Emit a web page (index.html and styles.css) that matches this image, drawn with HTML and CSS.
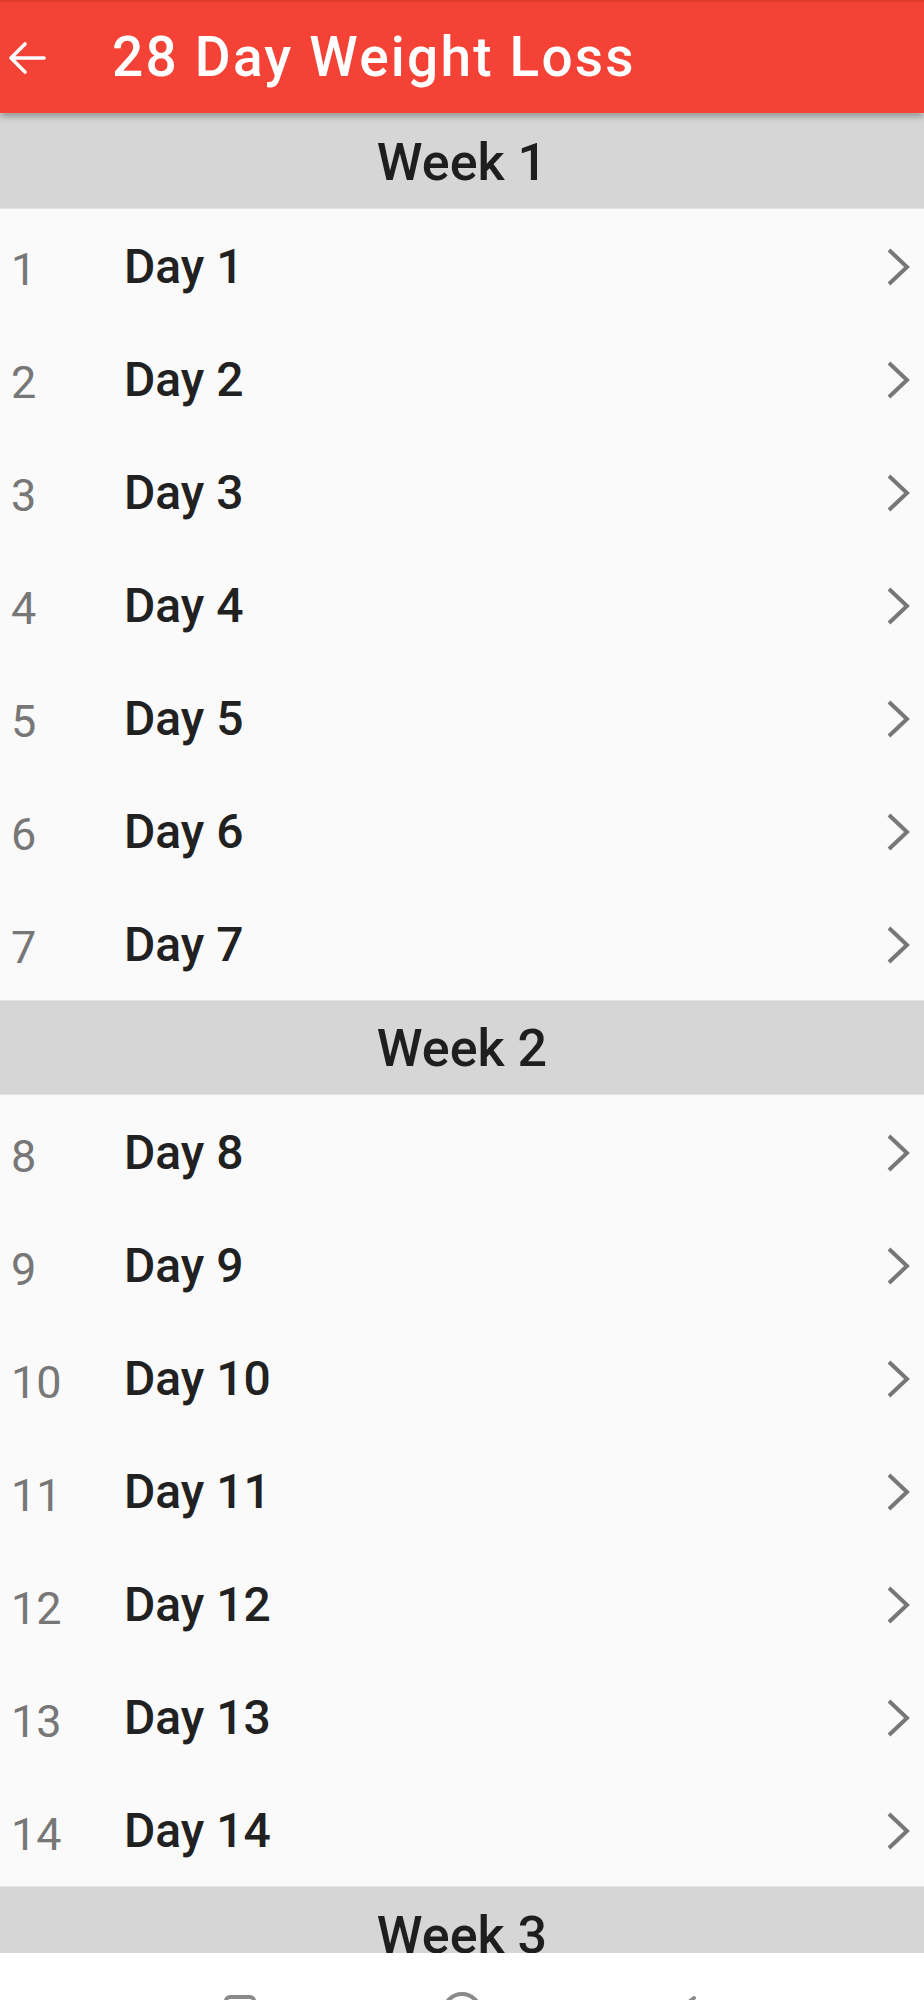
FILE: index.html
```html
<!DOCTYPE html>
<html lang="en">
<head>
<meta charset="utf-8">
<title>28 Day Weight Loss</title>
<link rel="stylesheet" href="styles.css">
</head>
<body>
<div class="app">
  <header class="appbar">
    <svg class="back" width="40" height="34" viewBox="0 0 40 34"><path d="M38 16H5M19 2L5 16l14 14" fill="none" stroke="#fff" stroke-width="3.6" stroke-linecap="round" stroke-linejoin="round"/></svg>
    <h1 class="title">28 Day Weight Loss</h1>
  </header>
  <main class="list">
    <section class="week">
      <div class="week-head">Week 1</div>
      <div class="row"><span class="num">1</span><span class="day">Day 1</span><svg class="chev" width="26" height="40" viewBox="0 0 26 40"><path d="M3 3l18 17L3 37" fill="none" stroke="#777" stroke-width="4"/></svg></div>
      <div class="row"><span class="num">2</span><span class="day">Day 2</span><svg class="chev" width="26" height="40" viewBox="0 0 26 40"><path d="M3 3l18 17L3 37" fill="none" stroke="#777" stroke-width="4"/></svg></div>
      <div class="row"><span class="num">3</span><span class="day">Day 3</span><svg class="chev" width="26" height="40" viewBox="0 0 26 40"><path d="M3 3l18 17L3 37" fill="none" stroke="#777" stroke-width="4"/></svg></div>
      <div class="row"><span class="num">4</span><span class="day">Day 4</span><svg class="chev" width="26" height="40" viewBox="0 0 26 40"><path d="M3 3l18 17L3 37" fill="none" stroke="#777" stroke-width="4"/></svg></div>
      <div class="row"><span class="num">5</span><span class="day">Day 5</span><svg class="chev" width="26" height="40" viewBox="0 0 26 40"><path d="M3 3l18 17L3 37" fill="none" stroke="#777" stroke-width="4"/></svg></div>
      <div class="row"><span class="num">6</span><span class="day">Day 6</span><svg class="chev" width="26" height="40" viewBox="0 0 26 40"><path d="M3 3l18 17L3 37" fill="none" stroke="#777" stroke-width="4"/></svg></div>
      <div class="row"><span class="num">7</span><span class="day">Day 7</span><svg class="chev" width="26" height="40" viewBox="0 0 26 40"><path d="M3 3l18 17L3 37" fill="none" stroke="#777" stroke-width="4"/></svg></div>
    </section>
    <section class="week">
      <div class="week-head">Week 2</div>
      <div class="row"><span class="num">8</span><span class="day">Day 8</span><svg class="chev" width="26" height="40" viewBox="0 0 26 40"><path d="M3 3l18 17L3 37" fill="none" stroke="#777" stroke-width="4"/></svg></div>
      <div class="row"><span class="num">9</span><span class="day">Day 9</span><svg class="chev" width="26" height="40" viewBox="0 0 26 40"><path d="M3 3l18 17L3 37" fill="none" stroke="#777" stroke-width="4"/></svg></div>
      <div class="row"><span class="num">10</span><span class="day">Day 10</span><svg class="chev" width="26" height="40" viewBox="0 0 26 40"><path d="M3 3l18 17L3 37" fill="none" stroke="#777" stroke-width="4"/></svg></div>
      <div class="row"><span class="num">11</span><span class="day">Day 11</span><svg class="chev" width="26" height="40" viewBox="0 0 26 40"><path d="M3 3l18 17L3 37" fill="none" stroke="#777" stroke-width="4"/></svg></div>
      <div class="row"><span class="num">12</span><span class="day">Day 12</span><svg class="chev" width="26" height="40" viewBox="0 0 26 40"><path d="M3 3l18 17L3 37" fill="none" stroke="#777" stroke-width="4"/></svg></div>
      <div class="row"><span class="num">13</span><span class="day">Day 13</span><svg class="chev" width="26" height="40" viewBox="0 0 26 40"><path d="M3 3l18 17L3 37" fill="none" stroke="#777" stroke-width="4"/></svg></div>
      <div class="row"><span class="num">14</span><span class="day">Day 14</span><svg class="chev" width="26" height="40" viewBox="0 0 26 40"><path d="M3 3l18 17L3 37" fill="none" stroke="#777" stroke-width="4"/></svg></div>
    </section>
    <section class="week">
      <div class="week-head">Week 3</div>
    </section>
  </main>
  <nav class="sysnav">
    <svg class="nav-ico" width="44" height="44" viewBox="0 0 44 44"><rect x="8" y="6" width="28" height="28" rx="4" fill="none" stroke="#8a8a8a" stroke-width="4"/></svg>
    <svg class="nav-ico" width="44" height="44" viewBox="0 0 44 44"><circle cx="22" cy="21" r="18" fill="none" stroke="#8a8a8a" stroke-width="4"/></svg>
    <svg class="nav-ico" width="44" height="44" viewBox="0 0 44 44"><path d="M32 7L14 21l18 14" fill="none" stroke="#8a8a8a" stroke-width="4" stroke-linecap="round" stroke-linejoin="round"/></svg>
  </nav>
</div>
</body>
</html>
```

FILE: styles.css
```css
* { box-sizing: border-box; }
html, body { margin: 0; padding: 0; }
body {
  font-family: Roboto, "Liberation Sans", Arial, sans-serif;
  background: #fafafa;
  color: #212121;
}
.app {
  display: flex;
  flex-direction: column;
  height: 100vh;
  overflow: hidden;
}
.appbar {
  flex: 0 0 113px;
  display: flex;
  align-items: center;
  background: #f44336;
  border-top: 2px solid #e0392d;
  box-shadow: 0 3px 7px rgba(0, 0, 0, 0.35);
  position: relative;
  z-index: 2;
  padding-left: 6px;
}
.back { flex: 0 0 auto; margin-top: 2px; }
.title {
  margin: 0 0 0 66px;
  font-size: 55px;
  font-weight: 500;
  color: #fff;
  letter-spacing: 2.2px;
  line-height: 1;
}
.list {
  flex: 1 1 auto;
  overflow: hidden;
  background: #fafafa;
}
.week-head {
  height: 95.5px;
  display: flex;
  align-items: center;
  justify-content: center;
  background: #d6d6d6;
  border-top: 1px solid #e4e4e4;
  border-bottom: 1px solid #e4e4e4;
  font-size: 52px;
  font-weight: 500;
  color: #1e1e1e;
  padding-top: 3px;
}
.row {
  height: 113px;
  display: flex;
  align-items: center;
}
.num {
  width: 124px;
  padding-left: 11px;
  padding-top: 9px;
  font-size: 45px;
  color: #777;
}
.day {
  flex: 1 1 auto;
  font-size: 48px;
  font-weight: 500;
  color: #212121;
  padding-top: 2px;
}
.chev { margin-right: 12px; margin-top: 3px; }
.sysnav {
  flex: 0 0 47px;
  background: #fff;
  display: flex;
  justify-content: center;
  align-items: flex-start;
  gap: 178px;
  overflow: hidden;
  padding-top: 38px;
}
.nav-ico { flex: 0 0 auto; }
```
